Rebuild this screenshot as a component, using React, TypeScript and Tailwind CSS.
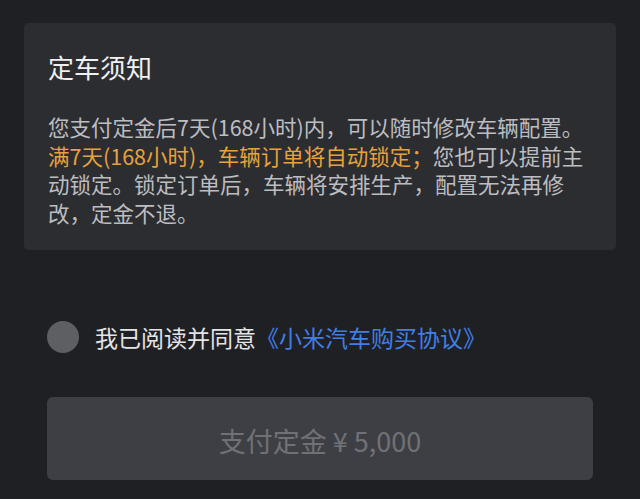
export default function App() {
  return (
    <div className="w-[640px] h-[499px] overflow-hidden bg-[#1f2024] px-[24px] pt-[23px] font-['Noto_Sans_CJK_SC','Noto_Sans',sans-serif]">
      <div className="h-[227px] rounded-[5px] bg-[#2c2d31] px-[24px] pt-[27px]">
        <h2 className="text-[26px] leading-[34px] text-[#f0f0f2]">定车须知</h2>
        <p className="mt-[29px] whitespace-nowrap text-[21.5px] leading-[28.7px] text-[#bcbdc1]">
          您支付定金后7天(168小时)内，可以随时修改车辆配置。
          <br />
          <span className="text-[#e6a23b]">满7天(168小时)，车辆订单将自动锁定；</span>您也可以提前主
          <br />
          动锁定。锁定订单后，车辆将安排生产，配置无法再修
          <br />
          改，定金不退。
        </p>
      </div>

      <div className="px-[23px]">
        <label className="mt-[71px] flex items-center gap-[16px]">
          <span className="h-[32px] w-[32px] shrink-0 rounded-full bg-[#5e5f63]" />
          <span className="text-[23px] leading-[32px] text-[#e4e4e6]">
            我已阅读并同意<span className="text-[#3f7fe4]">《小米汽车购买协议》</span>
          </span>
        </label>

        <button
          disabled
          className="mt-[44px] flex h-[83px] w-full items-center justify-center rounded-[6px] bg-[#3e3f44] pt-[6px] text-[27px] text-[#707176]"
        >
          支付定金 ¥ 5,000
        </button>
      </div>
    </div>
  );
}
